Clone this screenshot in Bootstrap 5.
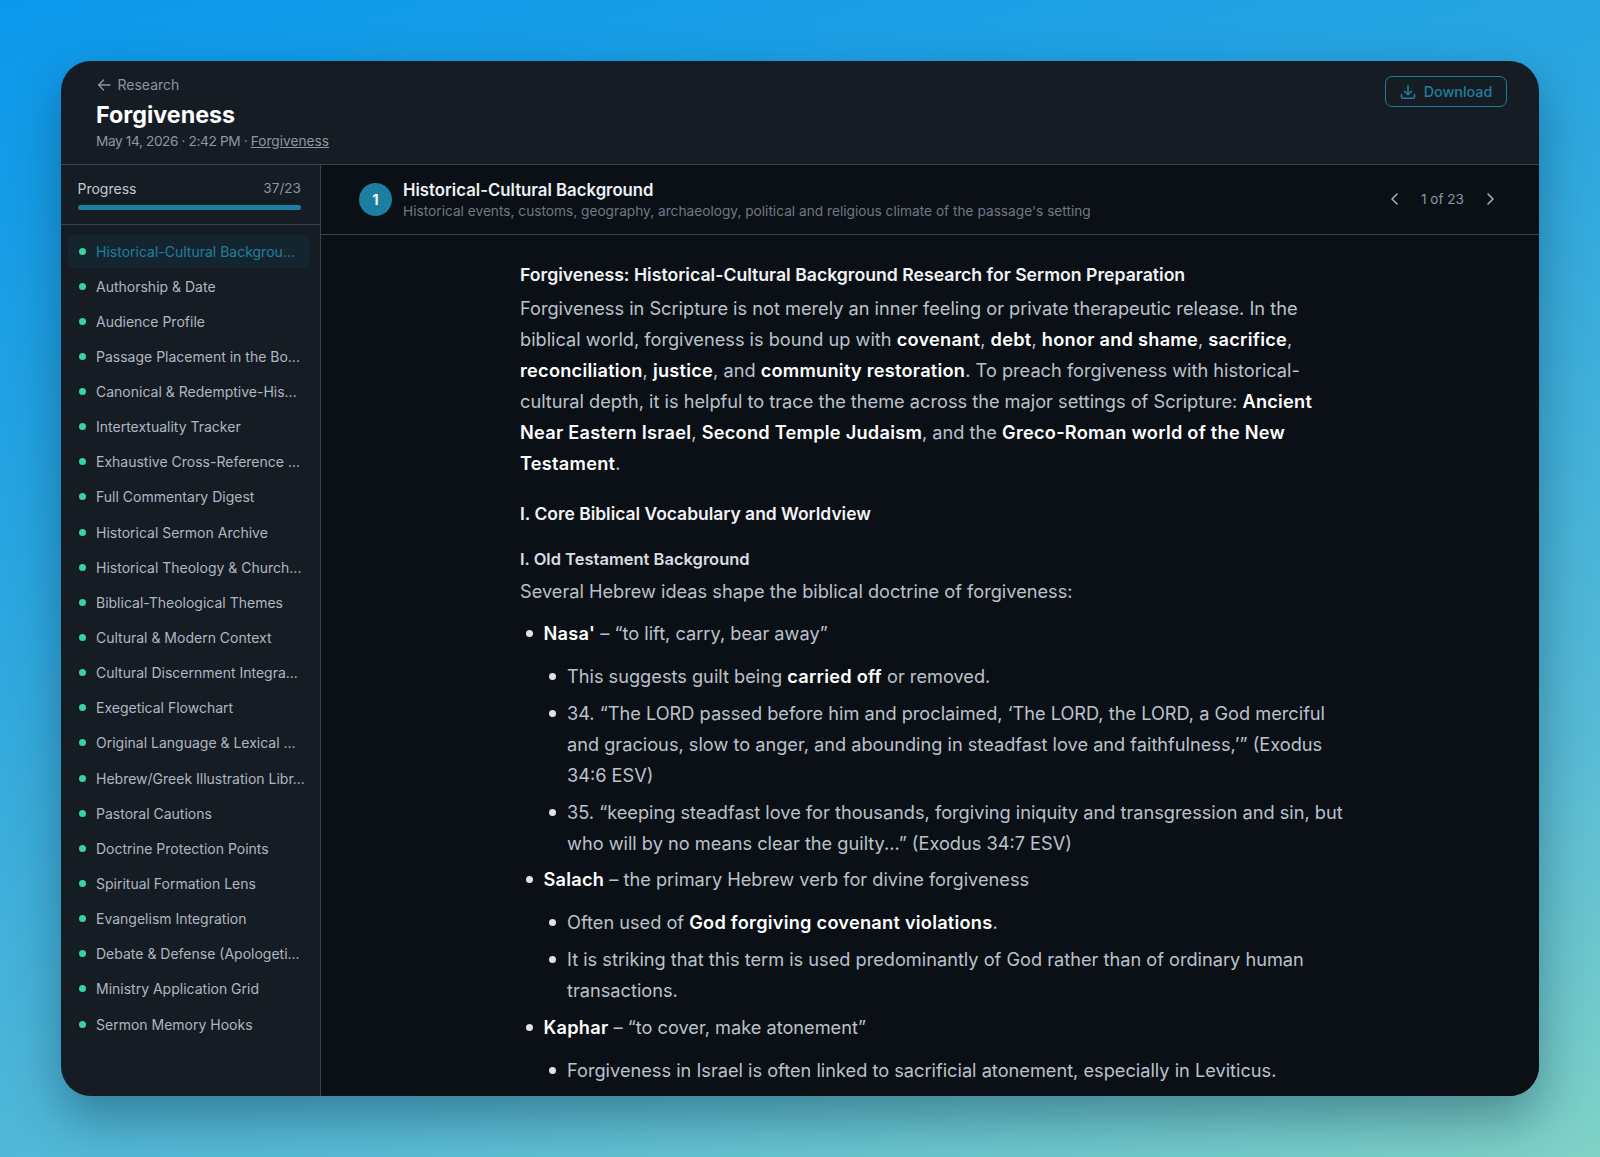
<!DOCTYPE html>
<html lang="en">
<head>
  <meta charset="UTF-8" />
  <meta name="viewport" content="width=device-width, initial-scale=1" />
  <title>Forgiveness - Research</title>
  <link href="https://cdn.jsdelivr.net/npm/bootstrap@5.3.2/dist/css/bootstrap.min.css" rel="stylesheet">
  <style>
    html, body { height: 100%; }
    body {
      margin: 0; height: 1157px; overflow: hidden; padding: 61px;
      background: linear-gradient(162deg, #0b98ec 0%, #2aa6e0 35%, #58bbd6 75%, #80d2c6 100%);
      font-family: Inter, "Noto Sans", sans-serif; color: #c3c9d2;
    }
    .app-shell {
      height: 1035px; background: #151c24; border-radius: 30px; overflow: hidden;
      box-shadow: 0 22px 50px rgba(10, 40, 60, .4);
    }
    .top-bar { height: 104px; padding: 14px 32px 0 35px; border-bottom: 1px solid #39434f; }
    .back-link { font-size: 14px; color: #8b94a1; line-height: 20px; text-decoration: none; }
    .back-link svg { margin-right: 5.5px; }
    .page-title { font-size: 23.3px; font-weight: 700; color: #fff; line-height: 30px; margin: 5px 0 1px; }
    .page-meta { font-size: 13.7px; color: #8d96a3; line-height: 20px; }
    .page-meta a { color: #8d96a3; }
    .meta-date { letter-spacing: -.4px; }
    .btn-dl {
      width: 122px; height: 31px; border: 1px solid #1f7c98; border-radius: 7px; background: none;
      color: #1f7f9d; font-size: 14.3px; font-weight: 500; margin-top: 1px;
    }
    .side-col { width: 260px; border-right: 1px solid #39434f; flex-shrink: 0; }
    .prog-box { height: 60px; padding: 13px 19px 0 16.5px; border-bottom: 1px solid #39434f; font-size: 14px; }
    .prog-bar { height: 5px; background: #1b7f9f; border-radius: 3px; margin-top: 6px; }
    .prog-num { color: #8d96a3; font-size: 13.6px; }
    .side-list { padding: 9.5px 10px 10px 7px; }
    .side-item {
      height: 33px; margin-bottom: 2.15px; padding: 0 0 0 11px; border-radius: 7px;
      font-size: 14px; color: #b0b7c1; white-space: nowrap;
    }
    .side-item.on { background: #15252f; color: #1f7f9d; }
    .side-dot { width: 7px; height: 7px; border-radius: 50%; background: #38d39f; margin-right: 10px; flex-shrink: 0; }
    .main-col { background: #0b1016; min-width: 0; }
    .step-head { height: 70px; padding: 0 41px 0 38px; border-bottom: 1px solid #39434f; }
    .step-num {
      width: 33px; height: 33px; border-radius: 50%; background: #1b7f9f; color: #fff;
      font-size: 14px; font-weight: 700; margin-right: 11px;
    }
    .step-title { font-size: 16.75px; font-weight: 600; color: #eef1f4; line-height: 22px; }
    .step-sub { font-size: 13.7px; color: #6f7985; line-height: 20px; }
    .step-count { font-size: 13.6px; color: #8d96a3; }
    .pager-arrow { display: block; }
    .pager-box { gap: 18px; }
    .doc-body { padding: 26px 0 0 199px; width: 1028px; font-size: 18.2px; line-height: 30.9px; color: #bcc2cb; }
    .doc-body strong { color: #fff; font-weight: 600; letter-spacing: .25px; }
    .doc-title { font-size: 17.65px; font-weight: 600; color: #f1f3f5; line-height: 28px; margin: 0 0 4px; }
    .doc-h2 { font-size: 17.45px; font-weight: 600; color: #f1f3f5; line-height: 28px; margin: 21.5px 0 18.5px; }
    .doc-h3 { font-size: 16.5px; font-weight: 600; color: #d9dde2; line-height: 26px; margin: 0 0 4px; }
    .doc-body p { margin: 0; }
    .doc-body ul { padding-left: 23.5px; margin: 0; list-style: none; }
    .doc-body ul ul { margin: 12px 0 0; }
    .doc-body li { margin-bottom: 5.9px; position: relative; }
    .doc-body li::before {
      content: ""; position: absolute; left: -18px; top: 12px; width: 7px; height: 7px;
      border-radius: 50%; background: #dfe3e7;
    }
    .doc-body ul ul li:last-child { margin-bottom: 0; }
    .doc-body p + ul { margin-top: 11px; }
  </style>
</head>
<body>
  <div class="app-shell d-flex flex-column">
    <div class="top-bar d-flex justify-content-between align-items-start flex-shrink-0">
      <div>
        <a class="back-link d-flex align-items-center" href="#">
          <svg width="16" height="16" viewBox="0 0 16 16" fill="none" stroke="#8b94a1" stroke-width="1.4" stroke-linecap="round" stroke-linejoin="round"><path d="M14 8H2.6M7.6 3 2.6 8l5 5"/></svg><span>Research</span>
        </a>
        <h1 class="page-title">Forgiveness</h1>
        <div class="page-meta"><span class="meta-date">May 14, 2026 · 2:42 PM · </span><a href="#">Forgiveness</a></div>
      </div>
      <button class="btn-dl d-flex align-items-center justify-content-center" type="button">
        <svg width="16" height="16" viewBox="0 0 16 16" fill="none" stroke="#1f7f9d" stroke-width="1.5" stroke-linecap="round" stroke-linejoin="round" class="me-2"><path d="M8 1.5v9M4.5 7.2 8 10.6l3.5-3.4M1.5 10.5v2.2c0 .9.7 1.6 1.6 1.6h9.8c.9 0 1.6-.7 1.6-1.6v-2.2"/></svg>Download
      </button>
    </div>
    <div class="d-flex flex-grow-1" style="min-height:0">
      <div class="side-col">
        <div class="prog-box">
          <div class="d-flex justify-content-between"><span>Progress</span><span class="prog-num">37/23</span></div>
          <div class="prog-bar"></div>
        </div>
        <div class="side-list">
          <div class="side-item on d-flex align-items-center"><span class="side-dot"></span>Historical-Cultural Backgrou...</div>
          <div class="side-item d-flex align-items-center"><span class="side-dot"></span>Authorship &amp; Date</div>
          <div class="side-item d-flex align-items-center"><span class="side-dot"></span>Audience Profile</div>
          <div class="side-item d-flex align-items-center"><span class="side-dot"></span>Passage Placement in the Bo...</div>
          <div class="side-item d-flex align-items-center"><span class="side-dot"></span>Canonical &amp; Redemptive-His...</div>
          <div class="side-item d-flex align-items-center"><span class="side-dot"></span>Intertextuality Tracker</div>
          <div class="side-item d-flex align-items-center"><span class="side-dot"></span>Exhaustive Cross-Reference ...</div>
          <div class="side-item d-flex align-items-center"><span class="side-dot"></span>Full Commentary Digest</div>
          <div class="side-item d-flex align-items-center"><span class="side-dot"></span>Historical Sermon Archive</div>
          <div class="side-item d-flex align-items-center"><span class="side-dot"></span>Historical Theology &amp; Church...</div>
          <div class="side-item d-flex align-items-center"><span class="side-dot"></span>Biblical-Theological Themes</div>
          <div class="side-item d-flex align-items-center"><span class="side-dot"></span>Cultural &amp; Modern Context</div>
          <div class="side-item d-flex align-items-center"><span class="side-dot"></span>Cultural Discernment Integra...</div>
          <div class="side-item d-flex align-items-center"><span class="side-dot"></span>Exegetical Flowchart</div>
          <div class="side-item d-flex align-items-center"><span class="side-dot"></span>Original Language &amp; Lexical ...</div>
          <div class="side-item d-flex align-items-center"><span class="side-dot"></span>Hebrew/Greek Illustration Libr...</div>
          <div class="side-item d-flex align-items-center"><span class="side-dot"></span>Pastoral Cautions</div>
          <div class="side-item d-flex align-items-center"><span class="side-dot"></span>Doctrine Protection Points</div>
          <div class="side-item d-flex align-items-center"><span class="side-dot"></span>Spiritual Formation Lens</div>
          <div class="side-item d-flex align-items-center"><span class="side-dot"></span>Evangelism Integration</div>
          <div class="side-item d-flex align-items-center"><span class="side-dot"></span>Debate &amp; Defense (Apologeti...</div>
          <div class="side-item d-flex align-items-center"><span class="side-dot"></span>Ministry Application Grid</div>
          <div class="side-item d-flex align-items-center"><span class="side-dot"></span>Sermon Memory Hooks</div>
        </div>
      </div>
      <div class="main-col flex-grow-1">
        <div class="step-head d-flex align-items-center">
          <div class="step-num d-flex align-items-center justify-content-center flex-shrink-0">1</div>
          <div class="flex-grow-1">
            <div class="step-title">Historical-Cultural Background</div>
            <div class="step-sub">Historical events, customs, geography, archaeology, political and religious climate of the passage's setting</div>
          </div>
          <div class="pager-box d-flex align-items-center">
            <svg class="pager-arrow" width="16" height="16" viewBox="0 0 16 16" fill="none" stroke="#aab1bb" stroke-width="1.5" stroke-linecap="round" stroke-linejoin="round"><path d="M10 3 5 8l5 5"/></svg>
            <span class="step-count">1 of 23</span>
            <svg class="pager-arrow" width="16" height="16" viewBox="0 0 16 16" fill="none" stroke="#aab1bb" stroke-width="1.5" stroke-linecap="round" stroke-linejoin="round"><path d="m6 3 5 5-5 5"/></svg>
          </div>
        </div>
        <div class="doc-body">
          <div class="doc-title">Forgiveness: Historical-Cultural Background Research for Sermon Preparation</div>
          <p>Forgiveness in Scripture is not merely an inner feeling or private therapeutic release. In the biblical world, forgiveness is bound up with <strong>covenant</strong>, <strong>debt</strong>, <strong>honor and shame</strong>, <strong>sacrifice</strong>, <strong>reconciliation</strong>, <strong>justice</strong>, and <strong>community restoration</strong>. To preach forgiveness with historical-cultural depth, it is helpful to trace the theme across the major settings of Scripture: <strong>Ancient Near Eastern Israel</strong>, <strong>Second Temple Judaism</strong>, and the <strong>Greco-Roman world of the New Testament</strong>.</p>
          <div class="doc-h2">I. Core Biblical Vocabulary and Worldview</div>
          <div class="doc-h3">I. Old Testament Background</div>
          <p>Several Hebrew ideas shape the biblical doctrine of forgiveness:</p>
          <ul>
            <li><strong>Nasa'</strong> – “to lift, carry, bear away”
              <ul>
                <li>This suggests guilt being <strong>carried off</strong> or removed.</li>
                <li>34. “The LORD passed before him and proclaimed, ‘The LORD, the LORD, a God merciful and gracious, slow to anger, and abounding in steadfast love and faithfulness,’” (Exodus 34:6 ESV)</li>
                <li>35. “keeping steadfast love for thousands, forgiving iniquity and transgression and sin, but who will by no means clear the guilty...” (Exodus 34:7 ESV)</li>
              </ul>
            </li>
            <li><strong>Salach</strong> – the primary Hebrew verb for divine forgiveness
              <ul>
                <li>Often used of <strong>God forgiving covenant violations</strong>.</li>
                <li>It is striking that this term is used predominantly of God rather than of ordinary human transactions.</li>
              </ul>
            </li>
            <li><strong>Kaphar</strong> – “to cover, make atonement”
              <ul>
                <li>Forgiveness in Israel is often linked to sacrificial atonement, especially in Leviticus.</li>
              </ul>
            </li>
          </ul>
        </div>
      </div>
    </div>
  </div>
  <script src="https://cdn.jsdelivr.net/npm/bootstrap@5.3.2/dist/js/bootstrap.bundle.min.js"></script>
</body>
</html>
